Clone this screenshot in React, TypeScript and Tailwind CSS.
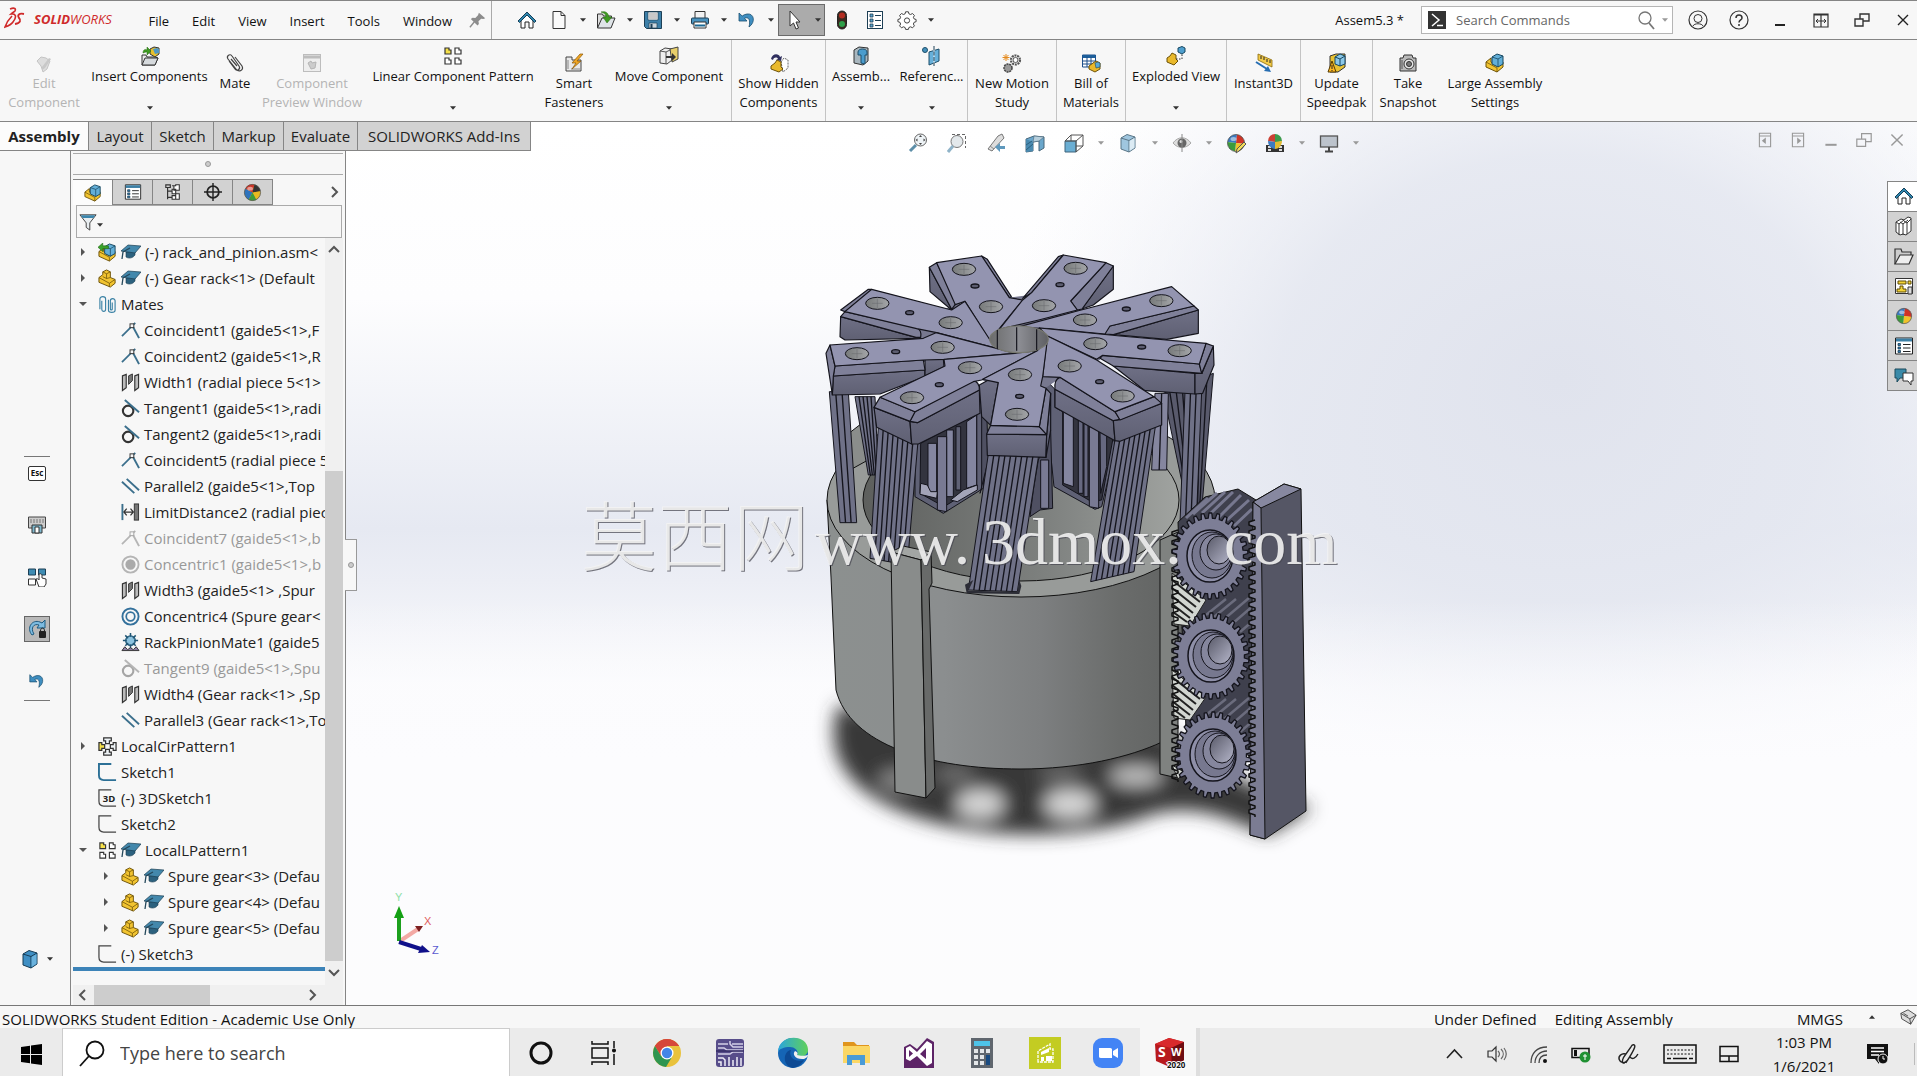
import * as React from "react"

type IconProps = { size?: number; children?: React.ReactNode; className?: string }

function Svg({ size = 20, children, className }: IconProps) {
  return (
    <svg width={size} height={size} viewBox="0 0 20 20" fill="none" className={className} aria-hidden="true">
      {children}
    </svg>
  )
}

const Caret = ({ light }: { light?: boolean }) => (
  <svg width="6" height="4" viewBox="0 0 7 4" aria-hidden="true">
    <path d="M0 0h7L3.500 4z" fill={light ? "#999" : "#333"} />
  </svg>
)

/* ---------- shared icons ---------- */

const HomeIcon = () => (
  <Svg>
    <path d="M4 10v8h4v-6h4v6h4v-8l-6-6z" fill="#fff" stroke="#222" />
    <path d="M1 11 10 2l9 9-1.500 1.500L10 5l-7.500 7.500z" fill="#2f86ad" stroke="#17405a" />
  </Svg>
)
const PageIcon = () => (
  <Svg>
    <path d="M4 1.500h8l4 4v13H4z" fill="#fafafa" stroke="#333" />
    <path d="M12 1.500v4h4" stroke="#333" />
  </Svg>
)
const OpenIcon = () => (
  <Svg>
    <path d="M1.500 18V4h5l1 2h8v3" fill="#ddd" stroke="#333" />
    <path d="M1.500 18 6 8h13l-4 10z" fill="#dfe4e8" stroke="#333" />
    <path d="M5 2c4-1 7 0 8 5h3l-5 6-4-6h3c0-3-2-4-5-5z" fill="#3f9a22" stroke="#256a10" strokeWidth=".5" />
  </Svg>
)
const SaveIcon = () => (
  <Svg>
    <path d="M1.500 1.500h17v17h-15l-2-2z" fill="#3c7fa8" stroke="#1d3f55" />
    <path d="M5 2h10v8H5z" fill="#fff" stroke="#1d3f55" strokeWidth=".7" />
    <path d="M6 4h8M6 6h8M6 8h8" stroke="#777" strokeWidth=".8" />
    <path d="M6 13h8v5H6z" fill="#ccd6dd" stroke="#1d3f55" strokeWidth=".7" />
    <path d="M7.500 14h2v4h-2z" fill="#1d3f55" />
  </Svg>
)
const PrintIcon = () => (
  <Svg>
    <path d="M5 8V1.500h10V8" fill="#f2f2f2" stroke="#333" />
    <rect x="1.500" y="8" width="17" height="6" rx="1" fill="#4a93bf" stroke="#1d3f55" />
    <path d="M4 12h12v6H4z" fill="#fff" stroke="#333" />
    <path d="M5 15.500h10" stroke="#1d6a95" strokeWidth="2" />
  </Svg>
)
const UndoIcon = ({ size = 20 }: { size?: number }) => (
  <Svg size={size}>
    <path d="M2 3v8h8L7.500 8.300C11 6.500 14 9 12 17c7-5 5-14-2-13-2 .3-3.500 1-4.800 2z" fill="#3f8ec0" stroke="#1a4f70" strokeWidth=".8" />
  </Svg>
)
const CursorIcon = () => (
  <Svg>
    <path d="M6 1v15l3.500-3 2.500 6 2.500-1-2.500-6H16z" fill="#fff" stroke="#333" />
  </Svg>
)
const TrafficIcon = () => (
  <Svg>
    <rect x="5.500" y="1" width="9" height="18" rx="4.500" fill="#3a2a20" stroke="#222" />
    <circle cx="10" cy="5.500" r="3" fill="#b32e22" />
    <circle cx="10" cy="14" r="3" fill="#2fa04a" />
  </Svg>
)
const OptionsIcon = () => (
  <Svg>
    <rect x="2.500" y="1.500" width="15" height="17" fill="#fff" stroke="#1d3f55" />
    <path d="M5 4h3v3H5zM5 9h3v3H5zM5 14h3v3H5z" fill="#5aa0c8" stroke="#1d3f55" strokeWidth=".8" />
    <path d="M10 5.500h6M10 10.500h6M10 15.500h6" stroke="#1d3f55" />
  </Svg>
)
const GearIcon = () => (
  <Svg>
    <path
      d="M8.600 1.800h2.800l.5 2 1.700.7 1.900-1 1.900 2-1 1.800.7 1.600 2 .6v2.200l-2 .6-.7 1.700 1 1.900-1.900 1.900-1.900-1-1.700.7-.5 1.900H8.600l-.5-1.900-1.700-.7-1.900 1-1.900-1.900 1-1.900-.7-1.700-2-.6V9.500l2-.6.7-1.600-1-1.800 1.900-2 1.900 1 1.700-.7z"
      fill="#fff" stroke="#444"
    />
    <circle cx="10" cy="10.500" r="2.600" stroke="#444" />
  </Svg>
)
const PinIcon = () => (
  <Svg size={18}>
    <path d="m11 2 7 6-2 1-2.500-.5-3 3 .5 3-1.500 1.500L2 9l2-1.500 3 .3 3-3z" fill="#8c8c8c" />
    <path d="m6 12-5 6" stroke="#8c8c8c" strokeWidth="1.500" />
  </Svg>
)

/* yellow L-shaped part, used all through the tree */
const PartIcon = ({ size = 20 }: { size?: number }) => (
  <Svg size={size}>
    <path d="M1 9 5 6V3l4-2 4 2v6l5 2v4l-5 4L1 14z" fill="#f2c430" stroke="#6d5208" />
    <path d="m5 3 4 2 4-2M9 5v5L5 8M9 10l4-1M1 9l11 6 6-4M12 15v4" stroke="#6d5208" strokeWidth=".8" />
  </Svg>
)
const AsmIcon = ({ green, size = 20 }: { green?: boolean; size?: number }) => (
  <Svg size={size}>
    <path d="M1 9 6 5v4l6 4 6-4v5l-6 5L1 14z" fill="#f2c430" stroke="#6d5208" />
    <path d="M1 9l11 6v4" stroke="#6d5208" strokeWidth=".8" />
    <path d="m7 4 5-3 6 2v8l-5 3-6-3z" fill="#63afd8" stroke="#174760" />
    <path d="m7 4 6 2 5-3M13 6v8" stroke="#174760" strokeWidth=".8" />
    {green && <path d="M0 4.500 5 0v3h6v3H5v3z" fill="#3aa32a" stroke="#1e6013" strokeWidth=".6" />}
  </Svg>
)
const CapIcon = () => (
  <Svg size={20}>
    <path d="M5 10v5c3 2 7 1 9-2v-4z" fill="#2c617e" stroke="#1b3e50" strokeWidth=".6" />
    <path d="M0 9 7 3l13 1-6 7z" fill="#4388ac" stroke="#1b3e50" strokeWidth=".7" />
    <path d="M9 6 2 10 1 17" stroke="#26495c" strokeWidth="1.300" />
  </Svg>
)
const BallIcon = ({ size = 20 }: { size?: number }) => (
  <Svg size={size}>
    <circle cx="10" cy="10" r="8.500" fill="#e8b921" />
    <path d="M10 10 2.600 5.800A8.500 8.500 0 0 0 6 17.500z" fill="#2e74bd" />
    <path d="M10 10 6 17.500a8.500 8.500 0 0 0 8 0z" fill="#3c9b3c" />
    <path d="M10 10 2.600 5.800A8.500 8.500 0 0 1 12 1.700z" fill="#cf3326" />
    <path d="M10 10 12 1.700a8.500 8.500 0 0 1 6.400 6.600z" fill="#333" />
    <circle cx="10" cy="10" r="8.500" stroke="#555" strokeWidth=".8" />
    <ellipse cx="7.500" cy="6" rx="3" ry="2" fill="#fff" opacity=".5" />
  </Svg>
)
// variant with even quarters
const BeachBallIcon = ({ size = 20 }: { size?: number }) => (
  <Svg size={size}>
    <path d="M10 10 1.500 9A8.500 8.500 0 0 1 11 1.500z" fill="#3b7ac0" />
    <path d="M10 10 11 1.500A8.500 8.500 0 0 1 18.500 11z" fill="#cf3326" />
    <path d="M10 10 18.500 11A8.500 8.500 0 0 1 9 18.500z" fill="#f0c229" />
    <path d="M10 10 9 18.500A8.500 8.500 0 0 1 1.500 9z" fill="#3c9b3c" />
    <circle cx="10" cy="10" r="8.500" stroke="#555" strokeWidth=".8" />
    <ellipse cx="7.500" cy="6" rx="3" ry="2" fill="#fff" opacity=".5" />
  </Svg>
)
const ListPanelIcon = ({ size = 20 }: { size?: number }) => (
  <Svg size={size}>
    <path d="M1.500 2h17v16h-17z" fill="#fff" stroke="#222" />
    <path d="M2 2.500h16v3H2z" fill="#3b7fa5" />
    <path d="M4 7.500h2.500v2H4zM4 11h2.500v2H4zM4 14.500h2.500v2H4z" fill="#2d7ab0" stroke="#1d3f55" strokeWidth=".8" />
    <path d="M9 8.500h7.500M9 12h7.500M9 15.500h7.500" stroke="#222" />
  </Svg>
)
const PatternIcon = ({ size = 20 }: { size?: number }) => (
  <Svg size={size}>
    <path d="M2 2h4v2h2v4H2z" fill="#f5e04a" stroke="#333" strokeWidth="1.200" />
    <path d="M12 2h4v2h2v4h-6zM2 12h4v2h2v4H2zM12 12h4v2h2v4h-6z" fill="#fff" stroke="#333" strokeWidth="1.200" />
  </Svg>
)
const CubeIcon = ({ soft }: { soft?: boolean }) => (
  <Svg>
    <path d="M3 5 9 1.500 17 4v11l-6 4-8-3z" fill={soft ? "#9fc6df" : "#3f8fc4"} stroke={soft ? "#5b7687" : "#173c55"} />
    <path d="m3 5 8 2.500L17 4M11 7.500V19" stroke={soft ? "#5b7687" : "#173c55"} />
    <path d="M11.500 8 16.500 5v9.700l-5 3.300z" fill={soft ? "#dcebf4" : "#6ab2dd"} />
  </Svg>
)

/* ---------- ribbon icons ---------- */

const EditCompIcon = () => (
  <Svg>
    <path d="m3 8 4-4 5 1 4 3-3 8-4 3-2-6z" fill="#ddd" stroke="#c4c4c4" />
    <path d="m8 14 7-9 2 1-6 9-3 2z" fill="#c8c8c8" />
  </Svg>
)
const InsertCompIcon = () => (
  <Svg>
    <path d="M2 19V9h4l1 2h8l3 1-3 7z" fill="#e8e8e8" stroke="#333" />
    <path d="M2 19 5 12h13l-3 7z" fill="#d6dadd" stroke="#333" />
    <path d="m10 3 4-2 5 1v6l-4 3-5-3z" fill="#e8c02d" stroke="#333" />
    <path d="m13 3 4-1 2 1v4l-4 1z" fill="#4f98c4" />
    <path d="M3 7c0-4 3-4 4-3V1l4 4-4 4V6c-1 0-2 0-4 1z" fill="#3f9a22" stroke="#256a10" strokeWidth=".5" />
  </Svg>
)
const MateIcon = () => (
  <Svg>
    <path
      d="m4 8 6 8c2 3 6 0 4-3L7 3C5 0 1 3 3 6l8 10c3 4 8 1 6-3L10 4M6 6l6 7"
      stroke="#444" strokeWidth="1.200"
    />
  </Svg>
)
const PreviewIcon = () => (
  <Svg>
    <rect x="1.500" y="1.500" width="17" height="17" fill="#eee" stroke="#bdbdbd" />
    <path d="M2 4h16" stroke="#bdbdbd" strokeWidth="3" />
    <path d="m6 10 3-2 1 2 4-1-1 6-4 1z" fill="#ccc" stroke="#b4b4b4" />
  </Svg>
)
const SmartIcon = () => (
  <Svg>
    <path d="M2 4h6v3h9v11H2z" fill="#e9e9e9" stroke="#444" />
    <path d="M4 7v9M7 16h9" stroke="#888" />
    <path d="m16 1-8 9h4l-4 6 9-8h-4l6-7z" fill="#f0a624" stroke="#8a5806" strokeWidth=".7" />
  </Svg>
)
const MoveIcon = () => (
  <Svg>
    <path d="m1 5 5-3 7 1v11l-5 4-7-1z" fill="#eee" stroke="#444" />
    <path d="m1 5 6 1 6-3M7 6v12" stroke="#555" />
    <path d="m11 3 8-2v12l-6 3z" fill="#e8cf6a" stroke="#444" />
    <path d="M7 10h6V7l4 4-4 4v-3H7z" fill="#333" />
  </Svg>
)
const ShowHiddenIcon = () => (
  <Svg>
    <path d="M2 6c1-6 8-6 9-2l2-1-1 5-5-1 2-1c-1-2-4-2-5 1z" fill="#30305f" />
    <path d="m12 9 3-4 4 2v8l-5 4z" fill="#fff" stroke="#666" strokeDasharray="2 1" />
    <path d="m2 13 4-3 2-3 4 2v5l2 2-4 3-8-3z" fill="#e9b92c" stroke="#6d5208" />
  </Svg>
)
const AsmFeatIcon = () => (
  <Svg>
    <path d="m3 4 5-3 9 1v13l-5 4-9-2z" fill="#a9b7bf" stroke="#333" />
    <path d="M7 6c0-4 9-4 9 0v3h-2v9l-4-1V9H7z" fill="#4a9ccd" stroke="#1d4f6b" />
  </Svg>
)
const RefGeoIcon = () => (
  <Svg>
    <circle cx="3" cy="4" r="2.500" fill="#4590bb" stroke="#1d4f6b" />
    <path d="m7 6 10-3v12L7 19z" fill="#67b0da" stroke="#1d4f6b" />
    <path d="M12 1v18" stroke="#fff" />
    <path d="M12 0v20" stroke="#1d3f55" strokeDasharray="4 1.500" />
  </Svg>
)
const MotionIcon = () => (
  <Svg>
    <circle cx="13.500" cy="7" r="4.500" fill="#fff" stroke="#555" strokeWidth="2.200" strokeDasharray="2 .8" />
    <circle cx="13.500" cy="7" r="2.500" stroke="#555" />
    <circle cx="6" cy="15" r="4" fill="#999" stroke="#444" strokeWidth="1.500" strokeDasharray="2 .8" />
    <path d="M4 1v7M.500 4.500h7M1.500 2l5 5M6.500 2l-5 5" stroke="#e58a1d" />
  </Svg>
)
const BomIcon = () => (
  <Svg>
    <path d="M1.500 2h13v12h-13z" fill="#fff" stroke="#1d4f8b" />
    <path d="M1.500 3.500h13" stroke="#1d5f9b" strokeWidth="3" />
    <path d="M1.500 8h13M1.500 11h13M6 4v10M10 4v10" stroke="#1d4f8b" />
    <path d="m8 13 4-3 3-2 4 2v6l-5 3-6-3z" fill="#e9b92c" stroke="#6d5208" />
    <path d="m14 10 3-1 2 1v4l-4 1z" fill="#5aa9d6" stroke="#174760" strokeWidth=".6" />
  </Svg>
)
const ExplodedIcon = () => (
  <Svg>
    <path d="m1 12 3-2 2-3 4 2v4l2 2-4 4-7-3z" fill="#e9b92c" stroke="#6d5208" />
    <path d="m12 2 4-1.500L19 2v4l-3 2-4-2z" fill="#4f9fce" stroke="#174760" />
    <path d="M10 13h6V8" stroke="#333" strokeDasharray="1.500 1.500" />
  </Svg>
)
const InstantIcon = () => (
  <Svg>
    <path d="m4 1 14 6v7L4 7z" fill="#f3cb48" stroke="#8a6a0b" strokeWidth=".8" />
    <path d="M7 3v3M10 4v3M13 6v3M16 7v3" stroke="#222" />
    <path d="m2 9 11 7" stroke="#276eb2" strokeWidth="2" />
    <path d="m17 19-7-1 4-5z" fill="#276eb2" />
  </Svg>
)
const UpdateIcon = () => (
  <Svg>
    <path d="m3 3 6-2h9v13l-7 5H3z" fill="#e9c232" stroke="#333" />
    <path d="m8 4 5-3 5 2v8l-5 2-5-2z" fill="#8cc8e8" stroke="#174760" />
    <path d="m8 4 5 2 5-3M13 6v7" stroke="#174760" />
    <path d="m5 8 4 11H1z" fill="#ffb820" stroke="#553a00" />
    <path d="M5 12v4M5 17v1" stroke="#222" />
  </Svg>
)
const CameraIcon = () => (
  <Svg>
    <path d="M2 5h3l1-3h8l1 3h3v13H2z" fill="#b9b9b9" stroke="#333" />
    <circle cx="11" cy="11" r="5" fill="#e5e5e5" stroke="#333" />
    <circle cx="11" cy="11" r="2.500" fill="#777" stroke="#333" />
    <path d="M4 7v9" stroke="#555" />
  </Svg>
)

type RibbonItem = {
  lines: string[]
  icon: React.ReactNode
  width: string
  arrow?: boolean
  disabled?: boolean
  divider?: boolean
}

const ribbon: RibbonItem[] = [
  { lines: ["Edit", "Component"], icon: <EditCompIcon />, width: "w-[88px]", disabled: true },
  { lines: ["Insert Components"], icon: <InsertCompIcon />, width: "w-[123px]", arrow: true },
  { lines: ["Mate"], icon: <MateIcon />, width: "w-12" },
  { lines: ["Component", "Preview Window"], icon: <PreviewIcon />, width: "w-[106px]", disabled: true },
  { lines: ["Linear Component Pattern"], icon: <PatternIcon />, width: "w-[176px]", arrow: true },
  { lines: ["Smart", "Fasteners"], icon: <SmartIcon />, width: "w-[66px]" },
  { lines: ["Move Component"], icon: <MoveIcon />, width: "w-[125px]", arrow: true, divider: true },
  { lines: ["Show Hidden", "Components"], icon: <ShowHiddenIcon />, width: "w-[94px]", divider: true },
  { lines: ["Assemb..."], icon: <AsmFeatIcon />, width: "w-[70px]", arrow: true },
  { lines: ["Referenc..."], icon: <RefGeoIcon />, width: "w-[72px]", arrow: true, divider: true },
  { lines: ["New Motion", "Study"], icon: <MotionIcon />, width: "w-[89px]", divider: true },
  { lines: ["Bill of", "Materials"], icon: <BomIcon />, width: "w-[69px]", divider: true },
  { lines: ["Exploded View"], icon: <ExplodedIcon />, width: "w-[101px]", arrow: true, divider: true },
  { lines: ["Instant3D"], icon: <InstantIcon />, width: "w-[74px]", divider: true },
  { lines: ["Update", "Speedpak"], icon: <UpdateIcon />, width: "w-[72px]", divider: true },
  { lines: ["Take", "Snapshot"], icon: <CameraIcon />, width: "w-[70px]" },
  { lines: ["Large Assembly", "Settings"], icon: <AsmIcon />, width: "w-[104px]" },
]

/* ---------- title bar ---------- */

const quickTools: { name: string; icon: React.ReactNode; arrow?: boolean; active?: boolean }[] = [
  { name: "Home", icon: <HomeIcon /> },
  { name: "New", icon: <PageIcon />, arrow: true },
  { name: "Open", icon: <OpenIcon />, arrow: true },
  { name: "Save", icon: <SaveIcon />, arrow: true },
  { name: "Print", icon: <PrintIcon />, arrow: true },
  { name: "Undo", icon: <UndoIcon />, arrow: true },
  { name: "Select", icon: <CursorIcon />, arrow: true, active: true },
  { name: "Rebuild", icon: <TrafficIcon /> },
  { name: "File Properties", icon: <OptionsIcon /> },
  { name: "Options", icon: <GearIcon />, arrow: true },
]

function TitleBar() {
  return (
    <header className="flex h-10 shrink-0 items-center border-y border-[#858585] bg-[#f7f7f7]">
      <div className="flex h-full w-[492px] shrink-0 items-center border-r border-[#aaa] pl-1">
        <svg width="22" height="22" viewBox="0 0 22 22" fill="none" aria-hidden="true" className="mb-1">
          <path d="M6 2c5-2 6 0 5 2-1 1-3 2-4 3 5-1 6 3 2 8-2 3-5 4-8 5 1-3 4-8 7-11" stroke="#cf2a2a" strokeWidth="1.600" />
          <path d="M20 7c-5-1-7 1-5 4 2 2 2 5-4 6" stroke="#cf2a2a" strokeWidth="1.800" />
        </svg>
        <span className="ml-2 text-[13px] italic text-[#cf2a2a]">
          <b>SOLID</b>WORKS
        </span>
        <nav className="ml-auto flex gap-[23px] pt-1 text-[13px]">
          {["File", "Edit", "View", "Insert", "Tools", "Window"].map((m) => (
            <button key={m}>{m}</button>
          ))}
        </nav>
        <button aria-label="Pin menu" className="ml-[17px] mr-1 w-[18px]"><PinIcon /></button>
      </div>
      <div className="flex h-8 pl-[18px]">
        {quickTools.map((t) => (
          <div key={t.name} className={t.active ? "flex bg-[#ababab] outline outline-1 -outline-offset-1 outline-[#6b6b6b]" : "flex"}>
            <button aria-label={t.name} className={"flex items-center justify-center " + (t.arrow ? "w-8" : "w-[33px]")}>{t.icon}</button>
            {t.arrow && <button aria-label={t.name + " menu"} className="flex w-[15px] items-center justify-center"><Caret /></button>}
          </div>
        ))}
      </div>
      <h1 className="mt-0.5 mr-[17px] ml-auto text-[13px]">Assem5.3 *</h1>
      <label className="flex h-7 w-[252px] items-center border border-[#b5b5b5] bg-white pl-1.5 pr-1">
        <svg width="18" height="18" viewBox="0 0 18 18" fill="none" aria-hidden="true">
          <rect width="18" height="18" fill="#333" />
          <path d="m4 3 7 6-7 6M9 14.500h6" stroke="#fff" strokeWidth="1.500" />
        </svg>
        <input
          aria-label="Search Commands"
          placeholder="Search Commands"
          className="ml-2.5 min-w-0 flex-1 bg-transparent pt-0.5 text-[13px] outline-none placeholder:text-[#666]"
        />
        <Svg>
          <circle cx="9" cy="8" r="6" stroke="#777" strokeWidth="1.300" />
          <path d="m13 13 5 6" stroke="#777" strokeWidth="1.800" />
        </Svg>
        <span className="ml-1.5"><Caret light /></span>
      </label>
      <div className="ml-[15px] flex gap-[21px] pr-1">
        <button aria-label="Account">
          <Svg>
            <circle cx="10" cy="10" r="9" stroke="#333" strokeWidth="1.200" />
            <circle cx="10" cy="8.500" r="4" stroke="#333" />
            <path d="M5 16c1-3 9-3 10 0" stroke="#333" />
          </Svg>
        </button>
        <button aria-label="Help">
          <Svg>
            <circle cx="10" cy="10" r="9" stroke="#333" strokeWidth="1.200" />
            <path d="M7 8c0-4 6-4 6 0 0 2-3 2-3 4.500M10 14v2" stroke="#333" strokeWidth="1.500" />
          </Svg>
        </button>
        <button aria-label="Minimize"><Svg><path d="M5 15h10" stroke="#222" strokeWidth="2" /></Svg></button>
        <button aria-label="Span displays">
          <Svg>
            <path d="M3 4h14v13H3zM10 4v13M3 5h14" stroke="#333" strokeWidth="1.200" />
            <path d="M5 11h10M7 9l-2 2 2 2M13 9l2 2-2 2" stroke="#333" />
          </Svg>
        </button>
        <button aria-label="Restore"><Svg><path d="M3 9h8v7H3zM8 9V4h9v7h-6" stroke="#333" strokeWidth="1.400" /></Svg></button>
        <button aria-label="Close"><Svg><path d="m5 5 10 10M15 5 5 15" stroke="#222" strokeWidth="1.400" /></Svg></button>
      </div>
    </header>
  )
}

function Ribbon() {
  return (
    <div className="flex h-[82px] shrink-0 border-b border-[#858585] bg-[#f7f7f7]">
      {ribbon.map((r) => (
        <button
          key={r.lines.join(" ")}
          disabled={r.disabled}
          className={
            "flex shrink-0 flex-col items-center text-[13px] leading-[19px] whitespace-nowrap " + r.width +
            (r.arrow ? " pt-1.5 pb-[11px]" : " pt-[13px]") +
            (r.disabled ? " text-[#b4b4b4]" : " text-[#111]") +
            (r.divider ? " border-r border-[#c4c4c4]" : "")
          }
        >
          {r.icon}
          <span className="mt-px flex flex-col">
            {r.lines.map((l) => <span key={l}>{l}</span>)}
          </span>
          {r.arrow && <span className="mt-auto"><Caret /></span>}
        </button>
      ))}
    </div>
  )
}

/* ---------- heads-up view toolbar ---------- */

const viewTools: { name: string; icon: React.ReactNode; arrow?: boolean }[] = [
  {
    name: "Zoom to Fit",
    icon: <Svg><circle cx="12.500" cy="7" r="6" fill="#eef3f6" stroke="#666" /><path d="m12.500 2 1.500 2h-3zM12.500 12l1.500-2h-3zM7.500 7l2-1.500v3zM17.500 7l-2-1.500v3z" fill="#444" /><path d="m8 12-6 6" stroke="#5d8ea8" strokeWidth="3" /></Svg>,
  },
  {
    name: "Zoom to Area",
    icon: <Svg><path d="M5 1.500h13.500V15" stroke="#666" strokeDasharray="3 2" /><circle cx="10" cy="8.500" r="6" fill="#e3e8eb" stroke="#777" /><path d="m6 13-5 6" stroke="#8fb3c8" strokeWidth="3" /></Svg>,
  },
  {
    name: "Previous View",
    icon: <Svg><path d="M2 16 12 3l4-2 2 4L6 18z" fill="#ddd" stroke="#777" /><path d="m4 13 4 3" stroke="#888" /><path d="m9 14 5-4v3h5v3h-5v3z" fill="#5f99bd" /></Svg>,
  },
  {
    name: "Section View",
    icon: <Svg><path d="m1 6 8-3 10 1v11l-5 3V8L8 9v9l-7 1z" fill="#6ba7cc" stroke="#49677a" /><path d="M1 6v13l7-1V9z" fill="#4a8ab0" /><path d="m1 12 6-4M1 17l7-6" stroke="#2c5f7d" /><path d="M9 3 8 9l6-1 5-4z" fill="#b7cfdc" stroke="#49677a" strokeWidth=".6" /></Svg>,
  },
  {
    name: "View Orientation",
    icon: <Svg><path d="M1 8h11v11H1z" fill="#6aaed3" stroke="#3e657c" /><path d="m1 8 6-6h12v11l-7 6V8zM7 2v6M19 2l-7 6M12 13h7" stroke="#555" /></Svg>,
    arrow: true,
  },
  { name: "Display Style", icon: <CubeIcon soft />, arrow: true },
  {
    name: "Hide/Show Items",
    icon: <Svg><path d="M1 10c5-7 13-7 18 0-5 6-13 6-18 0z" fill="#ddd" stroke="#aaa" /><circle cx="10" cy="10" r="4.500" fill="#666" /><circle cx="9" cy="8.500" r="1.500" fill="#ddd" /><path d="M10 1v18" stroke="#888" /></Svg>,
    arrow: true,
  },
  {
    name: "Edit Appearance",
    icon: <span className="relative"><BeachBallIcon /><svg className="absolute top-2 left-2" width="13" height="13" viewBox="0 0 13 13" aria-hidden="true"><path d="m2 12 1-4 7-7 2 2-7 7z" fill="#f3dc58" stroke="#555" /></svg></span>,
  },
  {
    name: "Apply Scene",
    icon: <Svg><path d="M1 12h18v7H1z" fill="#333" /><path d="M3 13h3v2H3zM14 13h3v2h-3zM3 16h3v2H3zM14 16h3v2h-3z" fill="#ddd" /><path d="M3 8a7 7 0 0 1 7-7v8z" fill="#cc4034" /><path d="M10 1a7 7 0 0 1 7 7l-7 2z" fill="#3c9b4c" /><path d="M3 8c0 5 4 8 7 8V9z" fill="#3b7ac0" /><path d="M17 8c0 5-4 8-7 8v-7z" fill="#e2bb30" /></Svg>,
    arrow: true,
  },
  {
    name: "View Settings",
    icon: <Svg><rect x="1.500" y="3" width="17" height="11" fill="#bcc3cc" stroke="#555" strokeWidth="1.300" /><path d="M10 14v4M6 18.500h8" stroke="#444" strokeWidth="2" /></Svg>,
    arrow: true,
  },
]

const docTabs = [
  { name: "Layout", width: "w-[63px]" },
  { name: "Sketch", width: "w-[62px]" },
  { name: "Markup", width: "w-[70px]" },
  { name: "Evaluate", width: "w-[74px]" },
  { name: "SOLIDWORKS Add-Ins", width: "w-[173px]" },
]

function TabRow() {
  return (
    <div className="relative z-10 flex h-[29px] shrink-0">
      <div role="tablist" className="flex shrink-0 border-b border-[#858585] text-[15px] leading-[27px] text-[#222]">
        <button role="tab" aria-selected="true" className="w-[89px] border-r border-[#858585] bg-[#fcfcfc] font-bold">Assembly</button>
        {docTabs.map((t) => (
          <button key={t.name} role="tab" aria-selected="false" className={"border-r border-[#858585] bg-[#d2d2d2] whitespace-nowrap " + t.width}>
            {t.name}
          </button>
        ))}
      </div>
      <div className="flex flex-1 justify-center pt-[11px] pr-1.5">
        {viewTools.map((t) => (
          <div key={t.name} className="flex h-5">
            <button aria-label={t.name} className="flex w-[39px] justify-center">{t.icon}</button>
            {t.arrow && <button aria-label={t.name + " menu"} className="flex w-[15px] items-center justify-center"><Caret light /></button>}
          </div>
        ))}
      </div>
      <div className="flex w-[180px] shrink-0 gap-[17px] pt-2.5 pl-5">
        <button aria-label="Expand left" className="h-4"><Svg size={16}><path d="M3 1.500h14v17H3zM3 5h14" stroke="#999" strokeWidth="1.400" /><path d="m11 7-5 4 5 4z" fill="#999" /></Svg></button>
        <button aria-label="Expand right" className="h-4"><Svg size={16}><path d="M3 1.500h14v17H3zM3 5h14" stroke="#999" strokeWidth="1.400" /><path d="m9 7 5 4-5 4z" fill="#999" /></Svg></button>
        <button aria-label="Minimize document" className="h-4"><Svg size={16}><path d="M3 16h14" stroke="#999" strokeWidth="2.500" /></Svg></button>
        <button aria-label="Restore document" className="h-4"><Svg size={16}><path d="M1 9h11v9H1zM7 9V2h12v10h-7" stroke="#999" strokeWidth="1.500" /></Svg></button>
        <button aria-label="Close document" className="h-4"><Svg size={16}><path d="m3 3 14 14M17 3 3 17" stroke="#999" strokeWidth="1.800" /></Svg></button>
      </div>
    </div>
  )
}

/* ---------- left rail ---------- */

const railButton = "flex size-[26px] shrink-0 items-center justify-center"

function Rail() {
  return (
    <aside className="flex w-[71px] shrink-0 flex-col border-r border-[#858585] bg-[#f7f7f7] pb-9">
      <div className="mt-[305px] ml-6 flex w-[26px] flex-col gap-[26px] border-y border-[#777] pt-[3px] pb-1.5">
        <button aria-label="Escape" className={railButton}>
          <span className="flex h-[15px] w-[18px] items-center justify-center rounded-xs border border-[#333] bg-white text-[8px] leading-none font-bold">Esc</span>
        </button>
        <button aria-label="Insert" className={railButton}><Svg><path d="M1.500 2h17v11h-17z" fill="#ccc" stroke="#444" /><path d="M3 5h14M3 7h14" stroke="#777" strokeDasharray="2 1" /><path d="M5 10h10v8H5z" fill="#7fb9cf" stroke="#333" /><path d="M8 12h4v6H8z" fill="#fff" stroke="#333" /></Svg></button>
        <button aria-label="Select components" className={railButton}><Svg><path d="M1.500 2h7v6h-7zM11.500 2h7v6h-7z" fill="#3f8cb3" stroke="#1d3f55" /><path d="M1.500 12h7v6h-7z" fill="#fff" stroke="#333" /><path d="M9 12c2-1 3 1 3 1V7c2-1 3 1 3 1v3l4 1v5l-2 3h-5z" fill="#fff" stroke="#333" /></Svg></button>
        <button aria-label="Rebuild lock" className={railButton + " border border-[#666] bg-[#b9b9b9]"}>
          <Svg><path d="M13 3C5 0-1 9 5 16l2-1C3 9 7 4 12 6l-2 3h8V1l-3 3z" fill="#7dbbe0" stroke="#1d5a80" /><rect x="12" y="12" width="7" height="7" rx="1" fill="#222" /><path d="M13.500 12c0-4 4-4 4 0" stroke="#222" /></Svg>
        </button>
        <button aria-label="Undo view" className={railButton}><UndoIcon size={18} /></button>
      </div>
      <div className="mt-auto ml-5 flex items-center gap-[7px]">
        <button aria-label="Display cube"><CubeIcon /></button>
        <Caret />
      </div>
    </aside>
  )
}

/* ---------- feature tree ---------- */

type MateKind = "coincident" | "width" | "tangent" | "parallel" | "limit" | "concentric" | "rack"

function MateGlyph({ kind, off }: { kind: MateKind; off?: boolean }) {
  const blue = off ? "#b5b5b5" : "#3b6f8c"
  const dark = off ? "#a5a5a5" : "#333"
  return (
    <Svg size={19}>
      {kind === "coincident" && <><path d="M1 16 15 2" stroke={blue} strokeWidth="1.800" /><path d="m12 5 7 13" stroke={blue} strokeWidth="2" /><rect x="9.500" y="3" width="4" height="4" fill="#f7f7f7" stroke={dark} /></>}
      {kind === "width" && <><path d="m1.500 3 4-1.500v14l-4 3zM14.500 3l4-1.500v14l-4 3z" fill="#bbb" stroke={dark} strokeWidth="1.200" /><path d="m8 3 4-2v7l-4 4z" fill="#777" stroke={dark} /></>}
      {kind === "tangent" && <><circle cx="7.500" cy="12.500" r="5.500" stroke={dark} strokeWidth="2.200" /><path d="m4 1 15 13" stroke={blue} strokeWidth="2" /></>}
      {kind === "parallel" && <path d="m1 5 13 12M6 2l13 12" stroke={blue} strokeWidth="2" />}
      {kind === "limit" && <><path d="M1.500 1v17" stroke={blue} strokeWidth="2" /><rect x="14" y="1" width="4.500" height="17" fill="#777" stroke={dark} /><path d="M3 9.500h10M6 6 3 9.500 6 13M10 6l3 3.500-3 3.500" stroke={dark} strokeWidth="1.300" /></>}
      {kind === "concentric" && <><circle cx="10" cy="10" r="8.500" stroke={off ? "#b5b5b5" : "#34719c"} strokeWidth="2" /><circle cx="10" cy="10" r="4.500" fill={off ? "#aaa" : "none"} stroke={off ? "#aaa" : "#34719c"} strokeWidth="1.800" /></>}
      {kind === "rack" && <><circle cx="10" cy="8" r="5" fill="#8bc2df" stroke="#1f5675" strokeWidth="1.500" /><path d="M10 0v4M10 12v4M2 8h4M14 8h4M4.500 2.500l3 3M12.500 10.500l3 3M15.500 2.500l-3 3M7.500 10.500l-3 3" stroke="#1f5675" strokeWidth="1.600" /><path d="M1 18.500h18l-3-4-3 3-3-2-3 2-3-3z" fill="#8d7fa5" stroke="#333" /></>}
    </Svg>
  )
}

function SketchGlyph({ kind }: { kind: "blue" | "3d" | "plain" }) {
  return (
    <Svg size={19}>
      <path d="M14 1H1v12c0 4 2 5 5 5h13" stroke={kind === "blue" ? "#2c7096" : "#444"} strokeWidth={kind === "blue" ? 2 : 1.300} />
      {kind === "3d" && <text x="5" y="14" fontSize="10" fontWeight="700" fill="#222">3D</text>}
    </Svg>
  )
}

const ClipIcon = () => (
  <Svg size={19}>
    <path d="M2 15V4c0-3 6-3 6 0v11c0 3-4 3-4 0V6M11 5v11c0 3 7 3 7 0V6c0-3-5-3-5 0v9c0 1 2 1 2 0V8" stroke="#3b82a5" strokeWidth="1.200" />
  </Svg>
)
const CirPatternIcon = () => (
  <Svg size={19}>
    <path d="M6 1h8v3h-2v3H8V4H6zM6 19h8v-3h-2v-3H8v3H6zM19 6v8h-3v-2h-3V8h3V6z" fill="#eef3f6" stroke="#333" strokeWidth="1.300" />
    <path d="M1 6v8h3v-2h3V8H4V6z" fill="#f5e04a" stroke="#333" strokeWidth="1.300" />
  </Svg>
)

type Node = { text: string; level: number; open?: boolean; icon: React.ReactNode; cap?: boolean; off?: boolean }

const mate = (text: string, kind: MateKind, off = false): Node => ({ text, level: 1, icon: <MateGlyph kind={kind} off={off} />, off })

const nodes: Node[] = [
  { text: "(-) rack_and_pinion.asm<", level: 0, open: false, icon: <AsmIcon green size={19} />, cap: true },
  { text: "(-) Gear rack<1> (Default", level: 0, open: false, icon: <PartIcon size={19} />, cap: true },
  { text: "Mates", level: 0, open: true, icon: <ClipIcon /> },
  mate("Coincident1 (gaide5<1>,F", "coincident"),
  mate("Coincident2 (gaide5<1>,R", "coincident"),
  mate("Width1 (radial piece 5<1>", "width"),
  mate("Tangent1 (gaide5<1>,radi", "tangent"),
  mate("Tangent2 (gaide5<1>,radi", "tangent"),
  mate("Coincident5 (radial piece 5", "coincident"),
  mate("Parallel2 (gaide5<1>,Top", "parallel"),
  mate("LimitDistance2 (radial piec", "limit"),
  mate("Coincident7 (gaide5<1>,b", "coincident", true),
  mate("Concentric1 (gaide5<1>,b", "concentric", true),
  mate("Width3 (gaide5<1> ,Spur", "width"),
  mate("Concentric4 (Spure gear<", "concentric"),
  mate("RackPinionMate1 (gaide5", "rack"),
  mate("Tangent9 (gaide5<1>,Spu", "tangent", true),
  mate("Width4 (Gear rack<1> ,Sp", "width"),
  mate("Parallel3 (Gear rack<1>,To", "parallel"),
  { text: "LocalCirPattern1", level: 0, open: false, icon: <CirPatternIcon /> },
  { text: "Sketch1", level: 0, icon: <SketchGlyph kind="blue" /> },
  { text: "(-) 3DSketch1", level: 0, icon: <SketchGlyph kind="3d" /> },
  { text: "Sketch2", level: 0, icon: <SketchGlyph kind="plain" /> },
  { text: "LocalLPattern1", level: 0, open: true, icon: <PatternIcon size={19} />, cap: true },
  { text: "Spure gear<3> (Defau", level: 1, open: false, icon: <PartIcon size={19} />, cap: true },
  { text: "Spure gear<4> (Defau", level: 1, open: false, icon: <PartIcon size={19} />, cap: true },
  { text: "Spure gear<5> (Defau", level: 1, open: false, icon: <PartIcon size={19} />, cap: true },
  { text: "(-) Sketch3", level: 0, icon: <SketchGlyph kind="plain" /> },
]

const managerTabs = [
  { name: "Feature tree", icon: <AsmIcon size={18} /> },
  { name: "Properties", icon: <ListPanelIcon size={18} /> },
  {
    name: "Configurations",
    icon: <Svg size={18}><path d="M2 2h5v3H2zM4 5v13M4 9h5M4 16h5" stroke="#333" strokeWidth="1.300" /><path d="M9 3h4v-1h4v6h-6V3M9 7h4v5H9zM9 14h4v4H9zM13 12h4v6h-4z" fill="#fff" stroke="#333" strokeWidth="1.200" /></Svg>,
  },
  { name: "Dimensions", icon: <Svg size={18}><circle cx="10" cy="10" r="6.500" stroke="#222" strokeWidth="2" /><path d="M10 0v20M0 10h20" stroke="#222" strokeWidth="1.600" /></Svg> },
  { name: "Appearances", icon: <BallIcon size={19} /> },
]

const Chevron = ({ d }: { d: string }) => (
  <svg width="12" height="12" viewBox="0 0 12 12" fill="none" aria-hidden="true">
    <path d={d} stroke="#555" strokeWidth="2" />
  </svg>
)

function FeaturePanel() {
  return (
    <section aria-label="Feature manager" className="relative flex w-[275px] shrink-0 flex-col border-r border-[#858585] bg-[#f7f7f7] px-0.5">
      <div className="mt-0.5 flex h-[22px] shrink-0 items-center justify-center border-y border-[#aaa]">
        <span className="size-1.5 rounded-full border border-[#999] bg-[#ccc]" />
      </div>
      <div role="tablist" className="mt-1 flex h-[26px] shrink-0">
        {managerTabs.map((t, i) => (
          <button
            key={t.name}
            role="tab"
            aria-label={t.name}
            aria-selected={i === 0}
            className={"flex w-10 items-center justify-center border-t border-r border-[#858585] " + (i === 0 ? "bg-[#fcfcfc]" : "border-b bg-[#d2d2d2]")}
          >
            {t.icon}
          </button>
        ))}
        <button aria-label="More tabs" className="mr-0.5 ml-auto"><Chevron d="m3 1 5 5-5 5" /></button>
      </div>
      <label className="ml-[3px] mr-px flex h-[33px] shrink-0 items-center border border-[#aaa] pl-0.5">
        <Svg size={18}>
          <path d="M1 2h18l-7 9v8l-4-3v-5z" fill="#e8edf0" stroke="#333" />
          <path d="M2 2.500h16l-2 3H4z" fill="#3b86ad" />
        </Svg>
        <span className="mt-1.5"><Caret /></span>
        <input aria-label="Filter tree" className="min-w-0 flex-1 bg-transparent outline-none" />
      </label>
      <div className="flex min-h-0 flex-1">
        <div className="min-w-0 flex-1 overflow-hidden">
          <ul className="pt-px text-[15px] leading-[26px]">
            {nodes.map((n) => (
              <li key={n.text} className={"flex h-[26px] items-center whitespace-nowrap " + (n.level ? "pl-[25px] " : "pl-0.5 ") + (n.off ? "text-[#999]" : "text-[#222]")}>
                <span className="flex w-[23px] shrink-0 justify-center pr-2">
                  {n.open !== undefined && (
                    <svg width="8" height="8" viewBox="0 0 8 8" aria-hidden="true">
                      <path d={n.open ? "M0 2h8L4 6z" : "M2 0v8l4-4z"} fill="#555" />
                    </svg>
                  )}
                </span>
                <span className="w-[23px] shrink-0">{n.icon}</span>
                {n.cap && <span className="w-6 shrink-0"><CapIcon /></span>}
                {n.text}
              </li>
            ))}
          </ul>
          <div className="h-1 bg-[#3c83b8]" />
        </div>
        <div className="flex w-[18px] shrink-0 flex-col items-center bg-[#f0f0f0]">
          <button aria-label="Scroll up" className="py-1.5"><Chevron d="m1 8 5-5 5 5" /></button>
          <div className="mt-auto h-[490px] w-full bg-[#cdcdcd]" />
          <button aria-label="Scroll down" className="py-1.5"><Chevron d="m1 3 5 5 5-5" /></button>
        </div>
      </div>
      <div className="flex h-5 shrink-0 items-center bg-[#f0f0f0] pl-1">
        <button aria-label="Scroll left"><Chevron d="M8 1 3 6l5 5" /></button>
        <div className="ml-[5px] h-full w-[116px] bg-[#cdcdcd]" />
        <button aria-label="Scroll right" className="mr-6 ml-auto"><Chevron d="m3 1 5 5-5 5" /></button>
      </div>
      <div className="absolute top-[388px] left-full flex h-[52px] w-3 items-center justify-center border border-l-0 border-[#999] bg-[#f7f7f7]">
        <span className="size-1.5 rounded-full border border-[#999] bg-[#ccc]" />
      </div>
    </section>
  )
}

/* ---------- 3D model ---------- */

type Pt = [number, number]
const mix = (a: Pt, b: Pt, t: number): Pt => [a[0] + (b[0] - a[0]) * t, a[1] + (b[1] - a[1]) * t]

// column with n vertical grooves, corners run clockwise from top left
function Fluted({ tl, tr, br, bl, n, fill = "#6f7187" }: { tl: Pt; tr: Pt; br: Pt; bl: Pt; n: number; fill?: string }) {
  const lines = Array.from({ length: n - 1 }).map((_, i) => {
    const a = mix(tl, tr, (i + 1) / n)
    const b = mix(bl, br, (i + 1) / n)
    return `M${a.join(" ")}L${b.join(" ")}`
  })
  return (
    <g stroke="#14141c">
      <path d={`M${tl.join(" ")}L${tr.join(" ")}L${br.join(" ")}L${bl.join(" ")}Z`} fill={fill} strokeWidth="3" />
      <path d={lines.join("")} strokeWidth="4" />
    </g>
  )
}

function gearPath(cx: number, cy: number, rx: number, ry: number, teeth: number) {
  const pts: string[] = []
  for (let i = 0; i < teeth; i++) {
    const steps: Pt[] = [[0, 0.88], [0.25, 0.88], [0.38, 1], [0.72, 1], [0.85, 0.88]]
    steps.forEach(([o, r]) => {
      const a = ((i + o) / teeth) * Math.PI * 2
      pts.push(`${(cx + Math.cos(a) * rx * r).toFixed(1)} ${(cy + Math.sin(a) * ry * r).toFixed(1)}`)
    })
  }
  return "M" + pts.join("L") + "Z"
}

const bigHoles: Pt[] = [
  [492, 118], [573, 230], [827, 115], [732, 227], [1084, 212], [855, 270], [1139, 362], [886, 341], [968, 498],
  [809, 408], [651, 553], [660, 434], [336, 503], [510, 413], [171, 371], [428, 352], [232, 220], [452, 278],
]
const smallHoles: Pt[] = [
  [525, 168], [780, 164], [979, 237], [1025, 351], [899, 455], [659, 499], [418, 464], [287, 365], [329, 248],
]

const armTops = [
  "M410 98 545 78 628 203 668 210 598 296 568 330 495 214 466 224Z",
  "M790 75 918 98 812 213 832 240 716 270 598 298 668 210 695 188Z",
  "M832 243 1115 170 1182 228 930 288 915 312 745 296 650 292Z",
  "M718 294 960 318 1218 340 1198 402 908 376 890 388 742 318Z",
  "M215 178 455 240 495 214 570 330 590 355 410 308 350 296 135 245Z",
  "M90 345 370 325 408 308 590 355 645 370 440 388 370 390 105 408Z",
  "M432 388 645 370 712 362 545 450 520 455 345 545 240 502 435 408Z",
  "M742 318 890 390 1062 500 945 545 780 442 728 440Z",
  "M712 362 742 330 728 440 722 468 738 475 718 590 572 586 595 458 548 448Z",
]
const armBevels = [
  "M545 78 562 88 634 200 628 203Z",
  "M388 112 410 98 468 220 455 238Z",
  "M918 98 940 108 846 237 832 240 812 213Z",
  "M775 80 790 75 695 188 668 205Z",
  "M1182 228 1195 240 940 314 915 312Q912 292 930 288Z",
  "M135 245 122 260 348 322 362 322Q366 300 350 294Z",
  "M215 178 135 245 122 240 205 178Z",
  "M105 408 370 390 375 420 100 438Z",
  "M90 345 78 370 97 494 100 438 105 408Z",
  "M908 376 1198 402 1206 430 940 408 900 385Z",
  "M1218 340 1240 348 1205 430 1198 402Z",
  "M520 452Q538 455 538 480L352 578 330 574 345 545Z",
  "M240 502 345 545 330 574 222 532Z",
  "M780 442Q762 448 765 478L940 572 960 568 945 545Z",
  "M945 545 1062 500 1085 520 960 570Z",
  "M572 586 718 590 740 614 560 612Z",
  "M738 475 752 490 740 614 718 590Z",
]
const armSides = [
  "M388 112 455 238 500 245 455 240 390 185Z",
  "M940 108 940 178 880 225 846 237Z",
  "M1195 240 1195 310 1100 328 940 314Z",
  "M122 260 348 322 355 325 135 330 120 320Z",
  "M100 438 375 420 375 440 240 492 97 495Z",
  "M375 388 430 386 432 410 375 438Z",
  "M940 408 1185 430 1185 492 1035 482Z",
  "M1206 430 1240 348 1242 405 1208 490 1185 492 1185 430Z",
  "M222 532 330 574 335 642 230 592Z",
  "M352 578 538 480 540 550 355 642 335 642 330 574Z",
  "M765 478 940 572 945 632 765 532Z",
  "M940 572 960 568 1085 520 1085 585 960 634 945 632Z",
  "M560 612 740 614 738 682 562 676Z",
  "M740 614 752 490 752 600 738 682Z",
  "M538 465 572 446 595 458 572 586 545 560Z",
]

function Arms() {
  return (
    <g transform="translate(800 230) scale(.33333)" strokeLinejoin="round">
      {/* rear legs */}
      <Fluted tl={[165, 500]} tr={[225, 500]} br={[235, 735]} bl={[205, 735]} n={5} />
      <Fluted tl={[1090, 490]} tr={[1240, 430]} br={[1205, 840]} bl={[1155, 800]} n={8} fill="#595a6c" />
      <Fluted tl={[1065, 490]} tr={[1105, 490]} br={[1100, 720]} bl={[1055, 720]} n={2} fill="#85869f" />
      <Fluted tl={[88, 485]} tr={[145, 485]} br={[170, 878]} bl={[120, 878]} n={3} />
      <Fluted tl={[1155, 485]} tr={[1205, 485]} br={[1190, 850]} bl={[1140, 880]} n={3} />
      {/* inner frames */}
      <g stroke="#14141c" strokeWidth="3">
        <path d="M345 640 545 470 560 600 550 775 430 850 345 800Z" fill="#5f6175" />
        <path d="M362 640 530 550 530 770 432 830 360 790Z" fill="#33343f" />
        <path d="M384 640h26v150h-26zM440 600h20v200h-20zM500 575l30-20v210l-30 10z" fill="#8486a0" />
        <path d="M412 620h28v225l-28-5z" fill="#797a93" />
        <path d="M468 590h14v190h-14z" fill="#5f6175" />
        <path d="M362 760l20 5 10 20 20 0-2 20-50-12zM490 780l42-15v15l-60 35-20-5z" fill="#a3a4b8" />
        <path d="M728 440 765 478 765 532 940 632 950 640 905 830 885 838 762 770Z" fill="#5f6175" />
        <path d="M788 535 940 620 905 810 875 815 788 765Z" fill="#33343f" />
        <path d="M790 540l30 20v210l-30-10z" fill="#8486a0" />
        <path d="M835 570h14v220h-14zM852 580h12v220h-12z" fill="#666880" />
        <path d="M868 590h28v245l-28-5z" fill="#797a93" />
        <path d="M900 600l20 10v100l-18 80z" fill="#666880" />
        <path d="M715 690 752 600 758 835 720 840 690 860 700 780Z" fill="#4f5062" />
        <path d="M722 690h24v145h-24z" fill="#797a93" />
        <path d="M545 540 560 540 565 690 540 790 545 775Z" fill="#4f5062" />
      </g>
      {/* front legs */}
      <Fluted tl={[235, 590]} tr={[354, 634]} br={[322, 1005]} bl={[210, 985]} n={8} />
      <Fluted tl={[565, 672]} tr={[716, 676]} br={[652, 1085]} bl={[505, 1080]} n={9} />
      <Fluted tl={[945, 630]} tr={[1066, 590]} br={[1002, 1025]} bl={[872, 1055]} n={8} />
      <path d="M495 1064 520 1050 505 1082 652 1085 658 1050 664 1068 658 1092 500 1090Z" fill="#2c2d36" />
      {/* backing under the hub so the arms read as one plate */}
      <path d="M455 225 690 195 850 235 930 300 900 390 780 445 735 475 560 455 440 410 370 395 350 300Z" fill="#77788f" />
      <g stroke="#14141c" strokeWidth="3.500">
        {armSides.map((d) => <path key={d} d={d} fill="url(#armSide)" />)}
        {armBevels.map((d) => <path key={d} d={d} fill="#7f8099" />)}
        {armTops.map((d) => <path key={d} d={d} fill="#9394b0" />)}
        <ellipse cx="657" cy="328" rx="88" ry="40" fill="url(#hub)" stroke="#77786f" />
        <path d="M592 300v58M650 292v70M710 298v62" />
      </g>
      {bigHoles.map(([x, y]) => (
        <g key={`${x}-${y}`}>
          <ellipse cx={x} cy={y} rx="35" ry="18" fill="url(#hole)" stroke="#14141c" strokeWidth="3" />
          <path d={`M${x - 16} ${y}h32M${x} ${y - 14}v28`} stroke="#66676c" strokeWidth="1.500" />
        </g>
      ))}
      {smallHoles.map(([x, y]) => (
        <ellipse key={`${x}-${y}`} cx={x} cy={y} rx="12" ry="6" fill="#5c5d70" stroke="#14141c" strokeWidth="4" />
      ))}
    </g>
  )
}

// one side of a straight rack drawn as a toothed strip
function rackTeeth(x: number, y0: number, y1: number, depth: number) {
  let d = `M${x} ${y0}`
  for (let y = y0; y < y1; y += 9) d += `l${-depth} 2v3l${depth} 2v2`
  return d
}

function Gears() {
  const gears: Pt[] = [[1210, 556], [1211, 656], [1213, 755]]
  return (
    <g strokeLinejoin="round">
      <path d="M1160 540 1178 532 1178 778 1160 774Z" fill="#7f8280" stroke="#111" />
      {/* far ends of the gears */}
      <path d="M1178 522 1205 497 1238 489 1256 500 1256 760 1222 740 1186 730Z" fill="#3f404d" stroke="#111" />
      <path d="M1186 518l22-20M1193 514l24-21M1202 513l23-21M1211 513l22-21M1219 517l22-22M1227 520l22-20M1234 526l18-17" stroke="#77788f" strokeWidth="3" />
      <path d="M1206 615l20-16M1214 617l22-18M1223 620l26-22M1232 624l22-19M1240 632l14-12M1206 715l20-16M1214 717l22-18M1223 720l26-22M1232 724l22-19M1240 732l14-12" stroke="#6b6c7d" strokeWidth="2.500" />
      <path d="M1172 573 1206 600 1190 626 1174 624ZM1172 670 1206 697 1190 720 1174 718ZM1172 765 1184 772 1178 779Z" fill="#d2d6d1" stroke="#222" />
      <path
        d="M1172 580l28 22M1172 588l24 19M1172 596l21 17M1172 604l18 14M1173 612l14 10M1172 677l28 22M1172 685l24 19M1172 693l21 17M1172 701l18 14M1173 709l12 9"
        stroke="#222" strokeWidth="2"
      />
      <path d={rackTeeth(1178, 530, 775, 6)} stroke="#111" fill="none" strokeWidth="1.500" />
      {/* purple rack */}
      <path d="M1253 502 1284 484 1301 489 1306 811 1265 839 1250 835 1252 760 1256 740Z" fill="#555665" stroke="#111" />
      <path d="M1253 502 1284 484 1301 489 1261 508Z" fill="#8788a0" stroke="#111" />
      <path d="M1253 502 1261 508 1265 839 1250 835Z" fill="#7b7c93" stroke="#111" />
      <path d={rackTeeth(1255, 520, 815, 6)} stroke="#111" fill="#7b7c93" strokeWidth="1.500" />
      {gears.map(([x, y]) => (
        <g key={y} stroke="#14141c">
          <path d={gearPath(x, y, 38, 43, 30)} fill="#7d7e96" strokeWidth="1.300" />
          <ellipse cx={x} cy={y} rx="23" ry="26" fill="#8e8fa8" strokeWidth="1.500" />
          <ellipse cx={x + 2} cy={y - 1} rx="20" ry="23" fill="#77788f" />
          <ellipse cx={x + 6} cy={y - 4} rx="16" ry="18" fill="#85869d" />
          <ellipse cx={x + 9} cy={y - 6} rx="12" ry="14" fill="url(#bore)" />
        </g>
      ))}
    </g>
  )
}

function Scene() {
  return (
    <svg className="absolute inset-0 h-full w-full" viewBox="0 122 1917 883" preserveAspectRatio="xMidYMid slice" aria-label="Assembly model">
      <defs>
        <linearGradient id="sky" x1="0" y1="0" x2="0" y2="1">
          <stop offset="0" stopColor="#ffffff" />
          <stop offset=".2" stopColor="#fdfdfe" />
          <stop offset=".46" stopColor="#e6e9f2" />
          <stop offset=".52" stopColor="#eceef5" />
          <stop offset=".64" stopColor="#fbfbfd" />
          <stop offset="1" stopColor="#fcfcfd" />
        </linearGradient>
        <radialGradient id="haze" cx="1560" cy="380" r="560" gradientUnits="userSpaceOnUse" gradientTransform="translate(0 76) scale(1 .8)">
          <stop offset="0" stopColor="#e0e3ed" />
          <stop offset=".5" stopColor="#e4e7f0" stopOpacity=".9" />
          <stop offset="1" stopColor="#eceef5" stopOpacity="0" />
        </radialGradient>
        <linearGradient id="floor" x1="0" y1="0" x2="0" y2="1">
          <stop offset="0" stopColor="#fcfcfe" stopOpacity="0" />
          <stop offset=".4" stopColor="#fcfcfe" />
          <stop offset="1" stopColor="#fcfcfd" />
        </linearGradient>
        <linearGradient id="wall" x1="0" y1="0" x2="1" y2="0">
          <stop offset="0" stopColor="#8c908f" />
          <stop offset=".3" stopColor="#8b8e8f" />
          <stop offset=".55" stopColor="#7d7f80" />
          <stop offset=".75" stopColor="#6a6c6b" />
          <stop offset="1" stopColor="#5c5e5d" />
        </linearGradient>
        <linearGradient id="inside" x1="0" y1="0" x2="1" y2="0">
          <stop offset="0" stopColor="#5d5f5d" />
          <stop offset=".6" stopColor="#7f8280" />
          <stop offset="1" stopColor="#a0a3a0" />
        </linearGradient>
        <linearGradient id="armSide" x1="0" y1="0" x2="0" y2="1">
          <stop offset="0" stopColor="#6f7086" />
          <stop offset="1" stopColor="#5f6073" />
        </linearGradient>
        <linearGradient id="hub" x1="0" y1="0" x2="1" y2="0">
          <stop offset="0" stopColor="#6b6c6c" />
          <stop offset=".5" stopColor="#8c8d93" />
          <stop offset="1" stopColor="#5e5f63" />
        </linearGradient>
        <linearGradient id="hole" x1="0" y1="0" x2="1" y2="0">
          <stop offset="0" stopColor="#777a7a" />
          <stop offset="1" stopColor="#a3a5a8" />
        </linearGradient>
        <linearGradient id="bore" x1="0" y1="0" x2="1" y2="1">
          <stop offset="0" stopColor="#585968" />
          <stop offset="1" stopColor="#b5b6ca" />
        </linearGradient>
        <filter id="soft" x="-20%" y="-20%" width="140%" height="140%">
          <feGaussianBlur stdDeviation="9" />
        </filter>
      </defs>

      <rect y="122" width="1917" height="883" fill="url(#sky)" />
      <rect y="122" x="900" width="1017" height="883" fill="url(#haze)" />
      <rect y="600" width="1917" height="405" fill="url(#floor)" />

      {/* ground shadow */}
      <g filter="url(#soft)">
        <path d="M838 705C820 765 860 800 925 820C1010 845 1110 833 1150 815C1200 800 1240 825 1268 835L1312 808 1240 780 1160 730 1000 740Z" fill="#383838" />
        <ellipse cx="980" cy="804" rx="24" ry="14" fill="#d8d8d8" />
        <ellipse cx="1070" cy="804" rx="26" ry="14" fill="#d8d8d8" />
        <ellipse cx="1136" cy="776" rx="26" ry="9" fill="#c8c8c8" />
        <ellipse cx="1060" cy="774" rx="22" ry="6" fill="#777" />
        <ellipse cx="900" cy="780" rx="22" ry="10" fill="#8a8a8a" />
        <ellipse cx="955" cy="775" rx="20" ry="7" fill="#777" />
      </g>

      {/* drum */}
      <g stroke="#111">
        <path d="M827 500 831 577 836 690C850 745 930 769 1020 769C1080 769 1130 757 1162 742L1170 700 1216 500Z" fill="url(#wall)" />
        <ellipse cx="1021" cy="500" rx="194" ry="97" fill="#989b99" />
        <ellipse cx="1021" cy="500" rx="158" ry="81" fill="url(#inside)" />
        <path d="M848 434 866 420 868 460 850 470Z" fill="#8a8d8b" />
      </g>

      <Arms />

      {/* front post */}
      <g stroke="#111">
        <path d="M891 552 903 546 931 552 921 560Z" fill="#a2a5a3" />
        <path d="M891 552 921 560 926 798 895 792Z" fill="#898c8b" />
        <path d="M921 560 931 552 932 583 929 589 935 788 926 798Z" fill="#686a69" />
      </g>

      <Gears />

      {/* axis triad */}
      <g strokeWidth="4">
        <path d="m400 941 18-12" stroke="#f3a9a4" />
        <path d="m415 926 8 0-4 6z" fill="#7d2020" />
        <path d="M399 941v-26" stroke="#1da01d" />
        <path d="m399 906-5 12h10z" fill="#14a014" />
        <path d="m399 942 22 7" stroke="#10108a" />
        <path d="m430 952-12 1 4-8z" fill="#10108a" />
      </g>
      <g fontSize="11" fontFamily="Liberation Sans, sans-serif">
        <text x="395" y="901" fill="#8fe0a8">Y</text>
        <text x="424" y="925" fill="#e05c5c">X</text>
        <text x="432" y="954" fill="#5a5ad0">Z</text>
      </g>

      {/* watermark */}
      <g className="drop-shadow-[1px_1px_0px_rgba(70,70,80,0.8)]" fill="#f3f3f3" fillOpacity=".9">
        <text x="581" y="565" fontSize="76" fontWeight="300" fontFamily="Noto Sans CJK SC, sans-serif">莫西网</text>
        <g fontSize="66" fontFamily="Liberation Serif, serif">
          <text x="815" y="564">www.</text>
          <text x="982" y="564">3dmox.</text>
          <text x="1224" y="564">com</text>
        </g>
      </g>
    </svg>
  )
}

/* ---------- task pane on the right edge ---------- */

const paneTabs = [
  { name: "Resources", icon: <HomeIcon /> },
  {
    name: "Design Library",
    icon: <Svg><path d="m2 6 5-3 3 1 4-3 3 1v13l-5 4-3-1-3 1-4-3z" fill="#fff" stroke="#333" /><path d="m2 6 3 2v11M5 8l5-4M6 6l3 2v11M9 8l5-4M10 5l3 2v11M13 7l4-4" stroke="#333" /></Svg>,
  },
  {
    name: "File Explorer",
    icon: <Svg><path d="M1 18V3h6l1 3h9v3" fill="#ccc" stroke="#333" strokeWidth="1.200" /><path d="M1 18 6 9h13l-4 9z" fill="#eee" stroke="#333" strokeWidth="1.200" /></Svg>,
  },
  {
    name: "View Palette",
    icon: <Svg><path d="M1.500 2.500h17v15h-17z" fill="#fff" stroke="#333" /><path d="M4 5h8v3H4zM14 5h3v3h-3zM6 10h3v3h3v3H3v-3h3z" fill="#f4d436" stroke="#5d4a05" /><path d="M14 11h4v7h-4z" fill="#ddd" stroke="#333" /></Svg>,
  },
  { name: "Appearances", icon: <BeachBallIcon size={18} /> },
  { name: "Custom Properties", icon: <ListPanelIcon /> },
  {
    name: "Forum",
    icon: <Svg><path d="M1 3h11v9H6l-3 4v-4H1z" fill="#3a8aa8" stroke="#1d4a5c" /><path d="M9 7h10v8h-2v4l-3-4H9z" fill="#fff" stroke="#333" /></Svg>,
  },
]

function TaskPane() {
  return (
    <aside className="mt-[30px] ml-auto flex h-[210px] w-[30px] flex-col border-t border-l border-[#858585]">
      {paneTabs.map((t, i) => (
        <button key={t.name} aria-label={t.name} className={"flex flex-1 items-center justify-center border-b border-[#858585] pl-0.5 " + (i === 0 ? "bg-white" : "bg-[#d2d2d2]")}>
          {t.icon}
        </button>
      ))}
    </aside>
  )
}

function StatusBar() {
  return (
    <footer className="flex h-[23px] shrink-0 items-center overflow-hidden border-t border-[#777] bg-[#f7f7f7] pl-0.5 text-[15px] leading-[22px] text-[#111] whitespace-nowrap">
      <span className="pt-1">SOLIDWORKS Student Edition - Academic Use Only</span>
      <span className="ml-auto pt-1">Under Defined</span>
      <span className="ml-[18px] pt-1">Editing Assembly</span>
      <span className="ml-[124px] pt-1">MMGS</span>
      <button aria-label="Units menu" className="ml-[26px] rotate-180"><Caret /></button>
      <Svg size={18} className="ml-6">
        <path d="m2 6 8-4 9 6-6 10L3 12z" fill="#ddd" stroke="#444" />
        <path d="m2 6 10 6 7-4M12 12l1 6M5 6l5 3" stroke="#444" />
      </Svg>
    </footer>
  )
}

/* ---------- Windows taskbar ---------- */

const apps: { name: string; icon: React.ReactNode; active?: boolean }[] = [
  { name: "Cortana", icon: <svg width="26" height="26" viewBox="0 0 26 26" fill="none"><circle cx="13" cy="13" r="10" stroke="#111" strokeWidth="3" /></svg> },
  {
    name: "Task View",
    icon: <svg width="26" height="26" viewBox="0 0 26 26" fill="none" stroke="#111" strokeWidth="1.500"><path d="M1 1v3h16V1M1 8h16v10H1zM1 25v-3h16v3M23 1v7M23 14v11" /><circle cx="23" cy="10.500" r="1.300" fill="#111" /></svg>,
  },
  {
    name: "Chrome",
    icon: (
      <svg width="30" height="30" viewBox="0 0 30 30">
        <circle cx="15" cy="15" r="14" fill="#e9c23c" />
        <path d="M15 15 2.900 8A14 14 0 0 1 27.100 8L15 8z" fill="#d6473a" />
        <path d="M15 8h12.100A14 14 0 0 0 2.900 8L9 18z" fill="#d6473a" />
        <path d="M2.900 8A14 14 0 0 0 14 29l6-10-5 2-6-3z" fill="#2f9550" />
        <circle cx="15" cy="15" r="6.500" fill="#fff" />
        <circle cx="15" cy="15" r="5.200" fill="#4285e8" />
      </svg>
    ),
  },
  {
    name: "Circuit",
    icon: (
      <svg width="30" height="30" viewBox="0 0 30 30" fill="none">
        <rect x="1" y="1" width="28" height="28" rx="3" fill="#574d8a" />
        <path d="M3 6h10M17 6h11M3 10h6l3 2h16M15 3v3l3 3h10M3 16h12l3-2h10" stroke="#d4cfe8" strokeWidth="1.500" />
        <path d="M3 20h5l2 2v6M3 24h3v4M14 28v-9M18 28v-6M22 28v-9M26 28v-8" stroke="#f0eef8" strokeWidth="1.500" />
        <path d="M1 13h28" stroke="#352c66" strokeWidth="1.500" />
      </svg>
    ),
  },
  {
    name: "Edge",
    icon: (
      <svg width="32" height="32" viewBox="0 0 32 32">
        <defs>
          <linearGradient id="edgeTop" x1="0" y1="0" x2="1" y2="0">
            <stop offset="0" stopColor="#2aa5dd" />
            <stop offset="1" stopColor="#5fd05a" />
          </linearGradient>
        </defs>
        <circle cx="16" cy="16" r="15" fill="#1565b5" />
        <path d="M1 15C2-4 31-3 31 13c0 6-8 8-11 5 2-3-1-8-7-8-6 0-11 2-12 5z" fill="url(#edgeTop)" />
        <path d="M14 13c-3 6 3 13 13 10-2 4-6 7-11 8C5 29 6 14 14 13z" fill="#0d4a94" />
        <path d="M18 14c-3 3 0 9 9 8 3-1 4-3 4-4-3 1-8 1-11 0 1-1 1-3-2-4z" fill="#f0f0f0" />
      </svg>
    ),
  },
  {
    name: "File Explorer",
    icon: (
      <svg width="30" height="30" viewBox="0 0 30 30">
        <path d="M2 4h11l3 3h12v5H2z" fill="#e0951d" />
        <path d="M2 8h27v17H2z" fill="#fbd765" />
        <path d="M6 27V17h18v10h-5v-5h-8v5z" fill="#4a9bd6" />
      </svg>
    ),
  },
  {
    name: "Visual Studio",
    icon: (
      <svg width="32" height="32" viewBox="0 0 32 32">
        <path d="m1 10 6-3 7 5L24 1l7 4v26H1z" fill="#5d2467" />
        <path d="m3 11 4-2 7 6L24 4l5 3v19l-5 3-10-10-7 5-4-2zM6 13v7l4-3.500zM23 11l-6 6 6 5z" fill="#fff" fillRule="evenodd" />
      </svg>
    ),
  },
  {
    name: "Calculator",
    icon: (
      <svg width="30" height="32" viewBox="0 0 30 32">
        <rect x="4" y="1" width="22" height="30" fill="#5f666e" />
        <path d="M7 4h16v5H7z" fill="#4ec3e8" />
        <path d="M7 12h4v4H7zM13 12h4v4h-4zM19 12h4v4h-4zM7 18h4v4H7zM13 18h4v4h-4zM7 24h4v4H7zM13 24h4v4h-4z" fill="#e3e6e8" />
        <path d="M19 18h4v10h-4z" fill="#194a80" />
      </svg>
    ),
  },
  {
    name: "Journal",
    icon: (
      <svg width="32" height="32" viewBox="0 0 32 32" fill="none">
        <rect width="32" height="32" fill="#c3cc22" />
        <path d="M9 25V14l12-7v5h3v13z" stroke="#fff" strokeWidth="1.300" strokeDasharray="3 1" />
        <path d="m12 15 8-4v4l-8 3zM17 19h6v5h-6zM12 20h3v4h-3z" fill="#fff" />
      </svg>
    ),
  },
  {
    name: "Zoom",
    icon: (
      <svg width="30" height="30" viewBox="0 0 30 30">
        <rect width="30" height="30" rx="9" fill="#4384f5" />
        <path d="M6 10h11c2 0 2 1 2 2v8H8c-2 0-2-1-2-2zM20 13l5-3v10l-5-3z" fill="#fff" />
      </svg>
    ),
  },
  {
    name: "SOLIDWORKS 2020",
    active: true,
    icon: (
      <svg width="32" height="32" viewBox="0 0 32 32">
        <path d="m1 7 14-6 15 4v18l-12 8L2 24z" fill="#b81a1d" />
        <path d="m1 7 14-6 15 4-13 6z" fill="#d92a2c" />
        <path d="m17 11 13-6v18l-12 8z" fill="#6e0d12" />
        <text x="4" y="20" fontSize="14" fontWeight="700" fill="#fff">S</text>
        <text x="17" y="19" fontSize="11" fontWeight="700" fill="#fff">W</text>
        <text x="13" y="31" fontSize="8" fontWeight="700" fill="#111" stroke="#fff" strokeWidth="2" paintOrder="stroke">2020</text>
      </svg>
    ),
  },
]

function Taskbar() {
  return (
    <div className="flex h-12 shrink-0 items-center bg-[#ebebeb]">
      <button aria-label="Start" className="flex h-full w-[62px] shrink-0 items-center justify-center pt-1">
        <svg width="21" height="21" viewBox="0 0 21 21" aria-hidden="true">
          <path d="m0 3 9-1.200v8.200H0zM10 1.600 21 0v10H10zM0 11h9v8.200L0 18zM10 11h11v10l-11-1.600z" />
        </svg>
      </button>
      <label className="flex h-full w-[448px] shrink-0 items-center border border-b-0 border-[#ccc] bg-white pt-0.5 pl-4">
        <svg width="26" height="28" viewBox="0 0 26 28" fill="none" aria-hidden="true">
          <circle cx="16" cy="10" r="8.500" stroke="#111" strokeWidth="1.800" />
          <path d="m10 16-9 10" stroke="#111" strokeWidth="1.800" />
        </svg>
        <input aria-label="Search Windows" placeholder="Type here to search" className="ml-[15px] min-w-0 flex-1 bg-transparent text-[18px] outline-none placeholder:text-[#444]" />
      </label>
      <div className="flex h-full gap-px">
        {apps.map((a) => (
          <button key={a.name} aria-label={a.name} className={"flex h-full shrink-0 items-center justify-center pt-0.5 " + (a.active ? "w-[60px] border-r-4 border-[#dedede] bg-[#f7f7f7] pl-1" : "w-[62px]")}>
            {a.icon}
          </button>
        ))}
      </div>
      <div className="ml-auto flex shrink-0 items-center pt-1">
        <button aria-label="Hidden icons" className="w-[41px] pl-3"><svg width="17" height="12" viewBox="0 0 17 12" fill="none"><path d="m1 10 7.500-8L16 10" stroke="#222" strokeWidth="1.600" /></svg></button>
        <button aria-label="Volume" className="w-[42px] pl-3"><Svg><path d="M1 7h4l4-4v14l-4-4H1z" stroke="#333" strokeWidth="1.200" /><path d="M11 7c2 2 2 4 0 6M14 5c3 3 3 7 0 10M17 4c3 4 3 8 0 12" stroke="#666" strokeWidth="1.200" /></Svg></button>
        <button aria-label="Network" className="w-[42px] pl-3"><Svg><path d="M2 19C2 9 8 3 18 3M6 19c0-7 5-12 12-12M10 19c0-5 3-8 8-8" stroke="#444" strokeWidth="1.300" /><circle cx="16" cy="17" r="2" fill="#111" /></Svg></button>
        <button aria-label="Battery" className="w-[44px] pl-3"><Svg><path d="M1 4.500h17v9H1z" stroke="#111" strokeWidth="1.500" /><path d="M3 6h3v6H3z" fill="#111" /><circle cx="14" cy="13" r="5.500" fill="#1f9132" /><path d="M14 10v6M12 12h4" stroke="#fff" /></Svg></button>
        <button aria-label="Pen" className="w-[52px] pl-3.5"><Svg size={22}><path d="M8 18C10 15 15 7 16 4c1-3-2-3-3-1L6 13c-2 4-1 6 1 5M8 10C4 9 1 12 2 15s5 4 7 1M12 13c2 2 5 1 7-3" stroke="#222" strokeWidth="1.300" /></Svg></button>
        <button aria-label="Touch keyboard" className="w-[52px] pl-2"><svg width="34" height="20" viewBox="0 0 34 20" fill="none" stroke="#111"><path d="M1 1h32v18H1z" strokeWidth="1.500" /><path d="M4 6h26M4 10h26" strokeDasharray="2 1.500" /><path d="M4 14.500h4M10 14.500h14M26 14.500h4" strokeWidth="1.500" /></svg></button>
        <button aria-label="Touchpad" className="w-[58px] pl-3"><Svg><path d="M1 2.500h18v15H1zM1 12h18M10 12v6" stroke="#111" strokeWidth="1.500" /></Svg></button>
        <button className="w-[78px] text-center text-[15px] leading-6">
          <span className="block">1:03 PM</span>
          <span className="block">1/6/2021</span>
        </button>
        <button aria-label="Notifications" className="mr-0.5 w-[72px] border-r border-[#bbb] pl-6">
          <svg width="22" height="22" viewBox="0 0 22 22" fill="none">
            <path d="M0 1h21v15h-9v5l-4-5H0z" fill="#111" />
            <path d="M4 5h13M4 8.500h13M4 12h8" stroke="#fff" strokeWidth="1.300" />
            <circle cx="16" cy="16" r="5" fill="#111" stroke="#eee" />
            <path d="M16 13v3h2" stroke="#fff" />
          </svg>
        </button>
      </div>
    </div>
  )
}

export default function App() {
  return (
    <div className="flex h-screen w-full flex-col overflow-hidden bg-white font-['Open_Sans','Noto_Sans','Noto_Sans_CJK_SC',sans-serif] text-[#111]">
      <TitleBar />
      <Ribbon />
      <main className="relative flex min-h-0 flex-1 flex-col">
        <Scene />
        <TabRow />
        <div className="relative flex min-h-0 flex-1">
          <Rail />
          <FeaturePanel />
          <TaskPane />
        </div>
      </main>
      <StatusBar />
      <Taskbar />
    </div>
  )
}
